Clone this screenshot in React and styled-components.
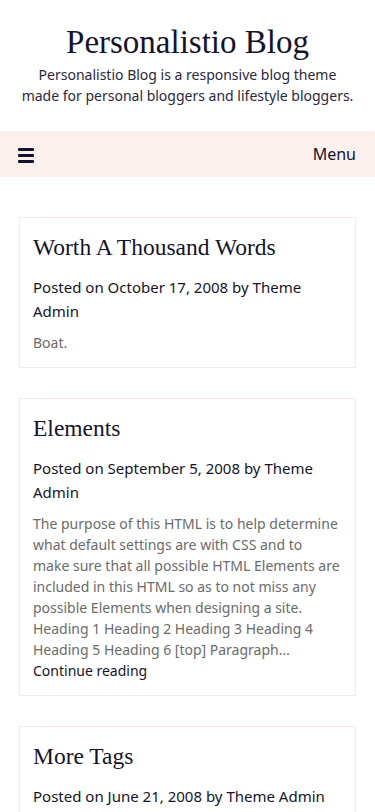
import React from "react";
import styled, { createGlobalStyle } from "styled-components";

const GlobalStyle = createGlobalStyle`
  html, body {
    margin: 0;
    padding: 0;
    background: #ffffff;
  }
  body {
    font-family: "Noto Sans", "Open Sans", sans-serif;
    color: #15132b;
  }
  * {
    box-sizing: border-box;
  }
`;

const Header = styled.header`
  text-align: center;
  padding: 22px 20px 25px;
`;

const SiteTitle = styled.h1`
  margin: 0;
  font-family: "Liberation Serif", "DejaVu Serif", serif;
  font-weight: 400;
  font-size: 33px;
  line-height: 40px;
  color: #15132b;
`;

const Tagline = styled.p`
  margin: 2px 0 0;
  font-size: 14px;
  line-height: 21px;
  color: #2a2840;
`;

const NavBar = styled.nav`
  display: flex;
  align-items: center;
  justify-content: space-between;
  height: 46px;
  padding: 0 19px 0 18px;
  background: #faf1ee;
`;

const MenuToggle = styled.button`
  display: flex;
  flex-direction: column;
  gap: 3px;
  padding: 0;
  border: none;
  background: none;
  width: 16px;
  margin-top: 2px;
`;

const Bar = styled.span`
  display: block;
  height: 3px;
  width: 16px;
  border-radius: 1px;
  background: #15132b;
`;

const MenuLabel = styled.span`
  font-size: 16px;
  color: #15132b;
`;

const Main = styled.main`
  display: flex;
  flex-direction: column;
  gap: 30px;
  padding: 40px 19px 40px;
`;

const Card = styled.article`
  border: 1px solid #f4eae7;
  padding: 15px 13px 14px;
`;

const PostTitle = styled.h2`
  margin: 0;
  font-family: "Liberation Serif", "DejaVu Serif", serif;
  font-weight: 400;
  font-size: 23.5px;
  line-height: 28px;
  color: #15132b;
`;

const Meta = styled.p`
  margin: 14px 0 0;
  font-size: 15px;
  line-height: 24px;
  color: #15132b;
`;

const Excerpt = styled.p`
  margin: 9px 0 0;
  font-size: 14px;
  line-height: 21px;
  color: #6b6b6b;
`;

const ReadMore = styled.a`
  display: block;
  font-size: 14px;
  line-height: 21px;
  color: #15132b;
  text-decoration: none;
`;

const posts = [
  {
    title: "Worth A Thousand Words",
    date: "October 17, 2008",
    excerpt: "Boat.",
  },
  {
    title: "Elements",
    date: "September 5, 2008",
    excerpt:
      "The purpose of this HTML is to help determine what default settings are with CSS and to make sure that all possible HTML Elements are included in this HTML so as to not miss any possible Elements when designing a site. Heading 1 Heading 2 Heading 3 Heading 4 Heading 5 Heading 6 [top] Paragraph…",
    more: true,
  },
  {
    title: "More Tags",
    date: "June 21, 2008",
    excerpt: "Sample tags post.",
  },
];

const App = () => {
  return (
    <>
      <GlobalStyle />
      <Header>
        <SiteTitle>Personalistio Blog</SiteTitle>
        <Tagline>
          Personalistio Blog is a responsive blog theme made for personal
          bloggers and lifestyle bloggers.
        </Tagline>
      </Header>
      <NavBar>
        <MenuToggle aria-label="Toggle menu">
          <Bar />
          <Bar />
          <Bar />
        </MenuToggle>
        <MenuLabel>Menu</MenuLabel>
      </NavBar>
      <Main>
        {posts.map((post) => (
          <Card key={post.title}>
            <PostTitle>{post.title}</PostTitle>
            <Meta>
              Posted on {post.date} by Theme Admin
            </Meta>
            <Excerpt>
              {post.excerpt}
              {post.more && <ReadMore href="#">Continue reading</ReadMore>}
            </Excerpt>
          </Card>
        ))}
      </Main>
    </>
  );
};

export default App;
